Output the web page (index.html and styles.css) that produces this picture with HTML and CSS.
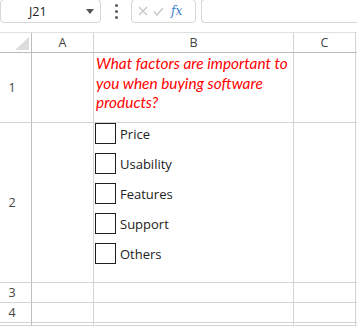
FILE: index.html
```html
<!DOCTYPE html>
<html lang="en">
<head>
    <meta charset="UTF-8">
    <title>Sheet</title>
    <link rel="stylesheet" href="styles.css">
</head>
<body>

    <div class="toolbar">
        <div class="name-box">
            <span class="cell-ref">J21</span>
            <svg class="caret" width="8" height="5" viewBox="0 0 8 5"><path d="M0 0h8L4 5z" fill="#555"/></svg>
        </div>
        <div class="dots"><i></i><i></i><i></i></div>
        <div class="fx-box">
            <svg width="10" height="10" viewBox="0 0 10 10"><path d="M1 1l8 8M9 1l-8 8" stroke="#c4c4c4" stroke-width="1.2" fill="none"/></svg>
            <svg width="11" height="9" viewBox="0 0 11 9"><path d="M1 4.5l3 3.5 6-7" stroke="#c4c4c4" stroke-width="1.2" fill="none"/></svg>
            <span class="fx">fx</span>
        </div>
        <div class="formula-input"></div>
    </div>

    <div class="sheet">
        <div class="corner"><span class="tri"></span></div>
        <div class="col-head">A</div>
        <div class="col-head">B</div>
        <div class="col-head">C</div>
        <div class="col-head last"></div>

        <div class="row-head">1</div>
        <div class="cell"></div>
        <div class="cell question">What factors are important to you when buying software products?</div>
        <div class="cell"></div>
        <div class="cell last"></div>

        <div class="row-head">2</div>
        <div class="cell"></div>
        <div class="cell">
            <ul class="options">
                <li><span class="box"></span>Price</li>
                <li><span class="box"></span>Usability</li>
                <li><span class="box"></span>Features</li>
                <li><span class="box"></span>Support</li>
                <li><span class="box"></span>Others</li>
            </ul>
        </div>
        <div class="cell"></div>
        <div class="cell last"></div>

        <div class="row-head">3</div>
        <div class="cell"></div>
        <div class="cell"></div>
        <div class="cell"></div>
        <div class="cell last"></div>

        <div class="row-head">4</div>
        <div class="cell"></div>
        <div class="cell"></div>
        <div class="cell"></div>
        <div class="cell last"></div>

        <div class="row-head"></div>
        <div class="cell"></div>
        <div class="cell"></div>
        <div class="cell"></div>
        <div class="cell last"></div>
    </div>

</body>
</html>
```

FILE: styles.css
```css
* {
    margin: 0;
    padding: 0;
    box-sizing: border-box;
}

body {
    font-family: 'Open Sans', 'Noto Sans', sans-serif;
    background: #fff;
    color: #222;
    width: 357px;
    height: 326px;
    overflow: hidden;
}

/* Formula bar */
.toolbar {
    display: flex;
    align-items: center;
    height: 33px;
    padding-bottom: 9px;
    border-bottom: 1px solid #e1e1e1;
}

.name-box,
.fx-box,
.formula-input {
    height: 24px;
    margin-top: -1px;
    border: 1px solid #d6d6d6;
    border-radius: 4px;
    background: #fff;
}

.name-box {
    display: flex;
    align-items: center;
    width: 101px;
    padding: 0 6px 0 28px;
}

.cell-ref {
    flex: 1;
    font-size: 12.5px;
    color: #222;
}

.dots {
    display: flex;
    flex-direction: column;
    gap: 3px;
    width: 30px;
    align-items: center;
}

.dots i {
    width: 3px;
    height: 3px;
    border-radius: 50%;
    background: #5a5a5a;
}

.fx-box {
    display: flex;
    align-items: center;
    gap: 5px;
    width: 65px;
    padding-left: 6px;
}

.fx {
    font-family: 'DejaVu Serif', serif;
    font-style: italic;
    font-size: 12px;
    color: #3d7fcf;
    margin-left: 2px;
}

.formula-input {
    flex: 1;
    margin-left: 5px;
    border-right: none;
    border-radius: 4px 0 0 4px;
}

/* Grid */
.sheet {
    display: grid;
    grid-template-columns: 32px 62px 200px 62px 1px;
    grid-template-rows: 20px 70px 160px 20px 20px 3px;
}

.corner,
.col-head,
.row-head,
.cell {
    border-right: 1px solid #d4d4d4;
    border-bottom: 1px solid #d4d4d4;
}

.corner {
    display: flex;
    justify-content: flex-end;
    align-items: flex-end;
    padding: 0 2px 2px 0;
    border-right-color: #bdbdbd;
    border-bottom-color: #bdbdbd;
}

.tri {
    width: 14px;
    height: 13px;
    background: #dcdcdc;
    clip-path: polygon(100% 0, 100% 100%, 0 100%);
}

.col-head {
    text-align: center;
    font-size: 12.5px;
    line-height: 19px;
    color: #444;
    border-bottom-color: #bdbdbd;
}

.row-head {
    display: flex;
    align-items: center;
    justify-content: center;
    padding-right: 7px;
    font-size: 12.5px;
    color: #444;
    border-right-color: #bdbdbd;
}

.last {
    border-right: none;
}

.question {
    padding: 1px 2px 0 2px;
    font-family: 'Lato', 'Open Sans', sans-serif;
    font-style: italic;
    font-size: 15.4px;
    line-height: 19.5px;
    color: #ff0000;
}

.options {
    list-style: none;
    display: flex;
    flex-direction: column;
    gap: 9px;
    padding-left: 1px;
}

.options li {
    display: flex;
    align-items: center;
    gap: 4px;
    height: 21px;
    font-size: 13px;
    color: #222;
}

.box {
    width: 21px;
    height: 21px;
    border: 1px solid #1e1e1e;
}
```
